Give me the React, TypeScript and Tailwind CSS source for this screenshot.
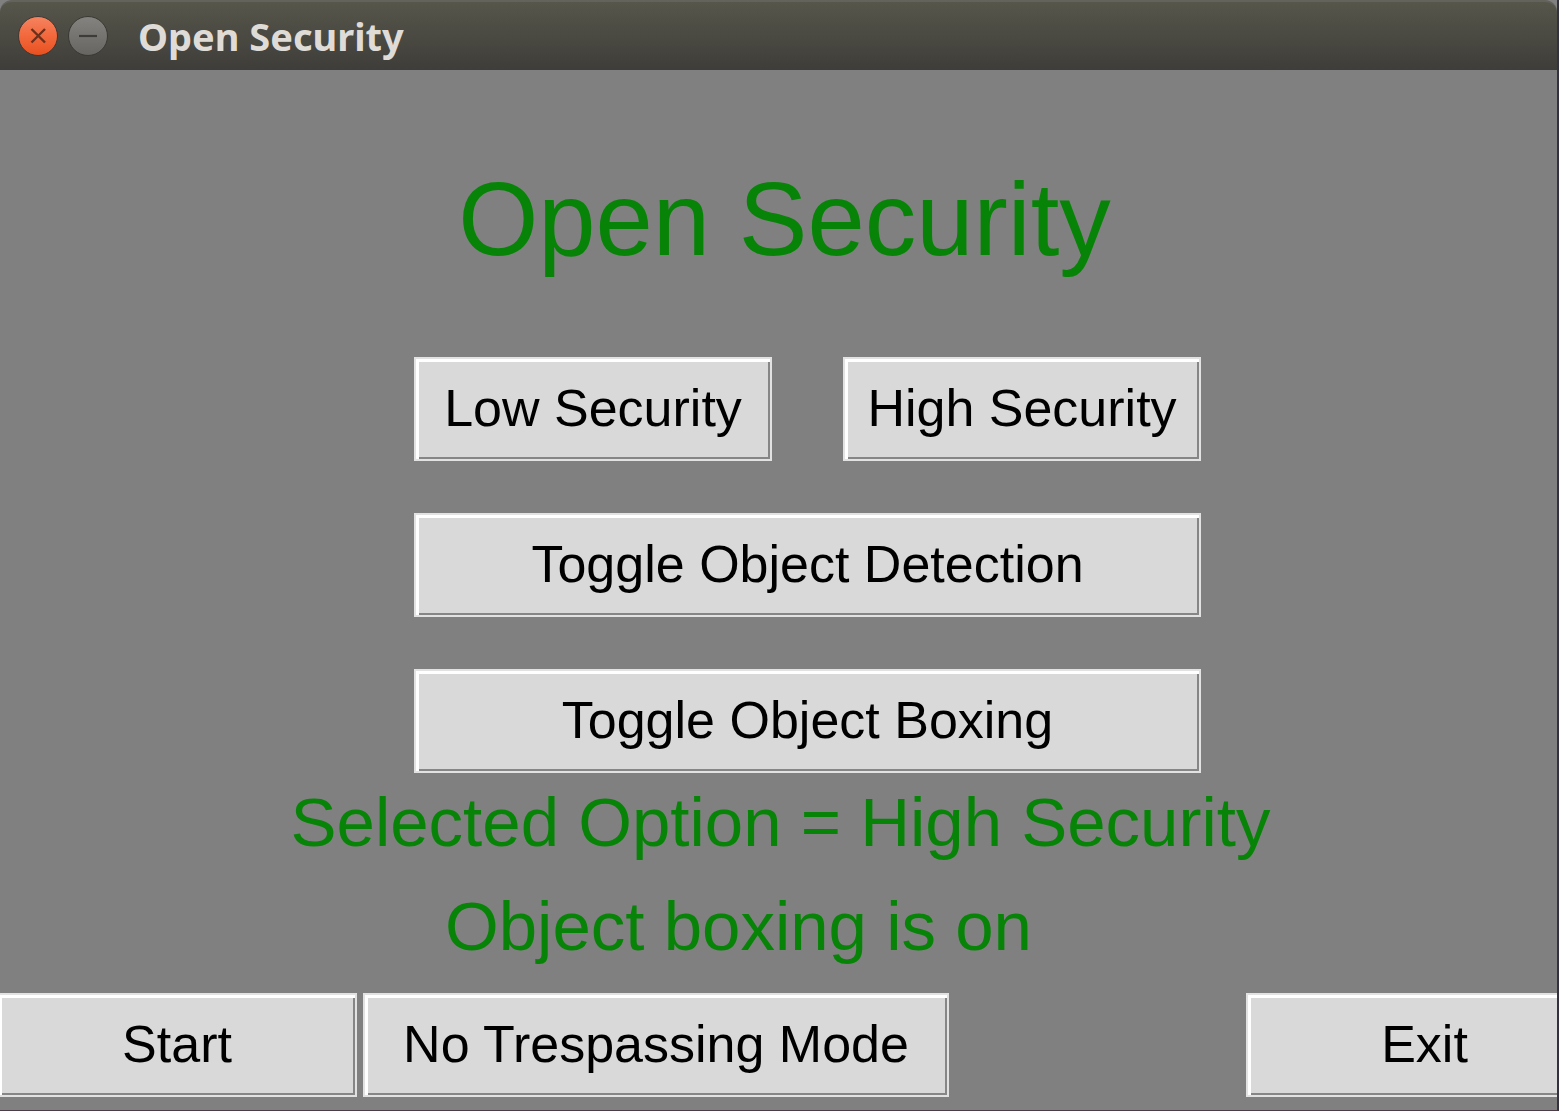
import { useState, type ReactNode } from "react";

type TkButtonProps = {
  children: ReactNode;
  className?: string;
  onClick?: () => void;
};

function TkButton({ children, className = "", onClick }: TkButtonProps) {
  return (
    <button
      type="button"
      onClick={onClick}
      className={`h-[104px] border-2 border-[#e2e2e2] bg-[#d9d9d9] pb-0.5 text-center text-[52px] leading-[60px] whitespace-nowrap text-black shadow-[inset_3px_3px_0_0_#ffffff,inset_-2px_-2px_0_0_#868686] ${className}`}
    >
      {children}
    </button>
  );
}

function TitleBar() {
  return (
    <header className="flex h-[70px] items-center gap-2.5 rounded-t-xl border-t-2 border-[#63625b] bg-linear-to-b from-[#57564b] to-[#3e3d39] pl-[18px]">
      <button type="button" aria-label="Close" className="size-10">
        <svg viewBox="0 0 40 40" className="size-10">
          <defs>
            <linearGradient id="close" x1="0" y1="0" x2="0" y2="1">
              <stop offset="0" stopColor="#f58460" />
              <stop offset="0.5" stopColor="#f2683c" />
              <stop offset="1" stopColor="#e8501f" />
            </linearGradient>
          </defs>
          <circle cx="20" cy="20" r="19.5" fill="url(#close)" stroke="#3b3833" />
          <path d="M13.500 13 27 26.500M27 13 13.500 26.500" stroke="#6b301c" strokeWidth="2.4" />
        </svg>
      </button>
      <button type="button" aria-label="Minimize" className="size-10">
        <svg viewBox="0 0 40 40" className="size-10">
          <defs>
            <linearGradient id="minimize" x1="0" y1="0" x2="0" y2="1">
              <stop offset="0" stopColor="#85837f" />
              <stop offset="1" stopColor="#666562" />
            </linearGradient>
          </defs>
          <circle cx="20" cy="20" r="19.5" fill="url(#minimize)" stroke="#3b3833" />
          <path d="M11 20H29" stroke="#3d3c38" strokeWidth="2.2" />
        </svg>
      </button>
      <span className="ml-5 font-['Noto_Sans','Open_Sans',sans-serif] text-[38px] leading-[48px] font-bold text-[#dfdcd8]">
        Open Security
      </span>
    </header>
  );
}

export default function App() {
  const [level, setLevel] = useState("High Security");
  const [status, setStatus] = useState("Object boxing is on");

  return (
    <div className="flex min-h-screen flex-col overflow-hidden border-r-2 border-b border-r-[#35323f] border-b-[#4b3c47] bg-[#808080] font-['Liberation_Sans',Arial,sans-serif]">
      <TitleBar />
      <main className="flex grow flex-col">
        <h1 className="mt-[98px] pl-3 text-center text-[103px] leading-[104px] text-[#078407]">
          Open Security
        </h1>
        <div className="mt-[85px] flex justify-center pl-[58px]">
          <div className="grid grid-cols-[358px_358px] gap-x-[71px] gap-y-[52px]">
            <TkButton onClick={() => setLevel("Low Security")}>Low Security</TkButton>
            <TkButton onClick={() => setLevel("High Security")}>High Security</TkButton>
            <TkButton
              className="col-span-2"
              onClick={() => setStatus("Object detection is on")}
            >
              Toggle Object Detection
            </TkButton>
            <TkButton className="col-span-2" onClick={() => setStatus("Object boxing is on")}>
              Toggle Object Boxing
            </TkButton>
          </div>
        </div>
        <div className="flex flex-col gap-1 text-center text-[69px] leading-[100px] text-[#078407]">
          <p className="pl-1">Selected Option = {level}</p>
          <p className="pr-20">{status}</p>
        </div>
        <div className="-mr-[46px] -ml-[3px] mt-4 flex gap-1.5">
          <TkButton className="w-[360px] shrink-0">Start</TkButton>
          <TkButton className="w-[586px] shrink-0">No Trespassing Mode</TkButton>
          <TkButton className="ml-auto w-[357px] shrink-0">Exit</TkButton>
        </div>
      </main>
    </div>
  );
}
